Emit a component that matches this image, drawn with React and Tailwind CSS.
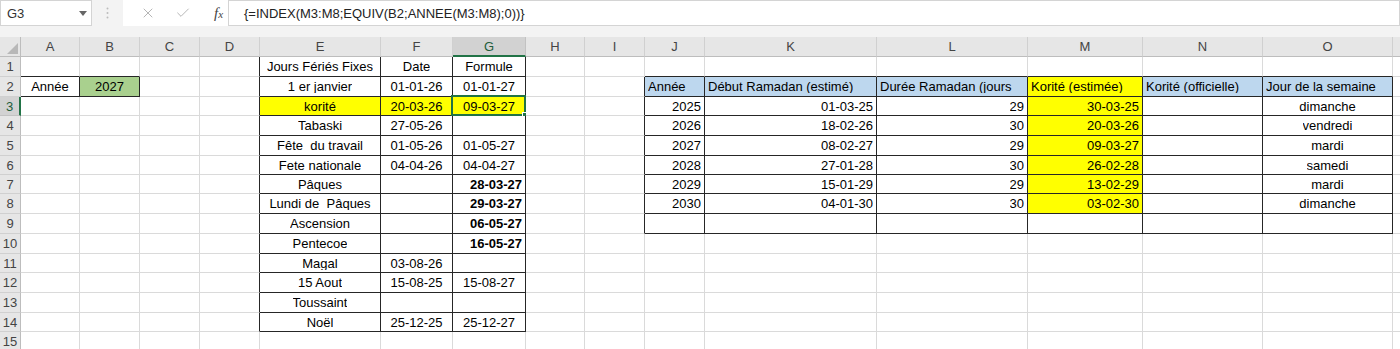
import { X, Check } from 'lucide-react'

const COLS = [
  { id: '', w: 'w-[21px]' },
  { id: 'A', w: 'w-[59px]' },
  { id: 'B', w: 'w-[60px]' },
  { id: 'C', w: 'w-[60px]' },
  { id: 'D', w: 'w-[60px]' },
  { id: 'E', w: 'w-[121px]' },
  { id: 'F', w: 'w-[72px]' },
  { id: 'G', w: 'w-[73px]' },
  { id: 'H', w: 'w-[59px]' },
  { id: 'I', w: 'w-[60px]' },
  { id: 'J', w: 'w-[60px]' },
  { id: 'K', w: 'w-[172px]' },
  { id: 'L', w: 'w-[151px]' },
  { id: 'M', w: 'w-[115px]' },
  { id: 'N', w: 'w-[120px]' },
  { id: 'O', w: 'w-[130px]' },
  { id: 'P', w: 'w-[40px]', hideLabel: true },
]

// row heights, rows 1..15
const ROWS = ['h-5', 'h-5', 'h-[19px]', 'h-5', 'h-5', 'h-[19px]', 'h-[19px]', 'h-5', 'h-5', 'h-5', 'h-[19px]', 'h-5', 'h-5', 'h-[19px]', 'h-5']

const YELLOW = 'bg-[#ffff00]'
const BLUE = 'bg-[#bdd7ee]'
const GREEN = 'bg-[#a9d08e]'

const cells = {
  E1: { v: 'Jours Fériés Fixes' },
  F1: { v: 'Date' },
  G1: { v: 'Formule' },
  A2: { v: 'Année' },
  B2: { v: '2027', bg: GREEN },
  E2: { v: '1 er janvier' },
  F2: { v: '01-01-26' },
  G2: { v: '01-01-27' },
  E3: { v: 'korité', bg: YELLOW },
  F3: { v: '20-03-26', bg: YELLOW },
  G3: { v: '09-03-27', bg: YELLOW },
  E4: { v: 'Tabaski' },
  F4: { v: '27-05-26' },
  E5: { v: 'Fête  du travail' },
  F5: { v: '01-05-26' },
  G5: { v: '01-05-27' },
  E6: { v: 'Fete nationale' },
  F6: { v: '04-04-26' },
  G6: { v: '04-04-27' },
  E7: { v: 'Pâques' },
  G7: { v: '28-03-27', bold: true, a: 'r' },
  E8: { v: 'Lundi de  Pâques' },
  G8: { v: '29-03-27', bold: true, a: 'r' },
  E9: { v: 'Ascension' },
  G9: { v: '06-05-27', bold: true, a: 'r' },
  E10: { v: 'Pentecoe' },
  G10: { v: '16-05-27', bold: true, a: 'r' },
  E11: { v: 'Magal' },
  F11: { v: '03-08-26' },
  E12: { v: '15 Aout' },
  F12: { v: '15-08-25' },
  G12: { v: '15-08-27' },
  E13: { v: 'Toussaint' },
  E14: { v: 'Noël' },
  F14: { v: '25-12-25' },
  G14: { v: '25-12-27' },
  J2: { v: 'Année', a: 'l', bg: BLUE },
  K2: { v: 'Début Ramadan (estimé)', a: 'l', bg: BLUE },
  L2: { v: 'Durée Ramadan (jours', a: 'l', bg: BLUE },
  M2: { v: 'Korité (estimée)', a: 'l', bg: YELLOW },
  N2: { v: 'Korité (officielle)', a: 'l', bg: BLUE },
  O2: { v: 'Jour de la semaine', a: 'l', bg: BLUE },
}

const ramadan = [
  ['2025', '01-03-25', '29', '30-03-25', 'dimanche'],
  ['2026', '18-02-26', '30', '20-03-26', 'vendredi'],
  ['2027', '08-02-27', '29', '09-03-27', 'mardi'],
  ['2028', '27-01-28', '30', '26-02-28', 'samedi'],
  ['2029', '15-01-29', '29', '13-02-29', 'mardi'],
  ['2030', '04-01-30', '30', '03-02-30', 'dimanche'],
]
ramadan.forEach((r, i) => {
  const n = i + 3
  cells['J' + n] = { v: r[0], a: 'r' }
  cells['K' + n] = { v: r[1], a: 'r' }
  cells['L' + n] = { v: r[2], a: 'r' }
  cells['M' + n] = { v: r[3], a: 'r', bg: YELLOW }
  cells['O' + n] = { v: r[4] }
})

const ranges = [
  { c1: 1, c2: 2, r1: 2, r2: 2 },
  { c1: 5, c2: 7, r1: 1, r2: 14 },
  { c1: 10, c2: 15, r1: 2, r2: 9 },
]
const inRange = (c, r) => ranges.some((g) => c >= g.c1 && c <= g.c2 && r >= g.r1 && r <= g.r2)

const SEL_COL = 7
const SEL_ROW = 3

function Cell({ c, r }) {
  const col = COLS[c]
  const data = cells[col.id + r]
  const right = inRange(c, r) || inRange(c + 1, r) ? 'border-r-[#262626]' : 'border-r-[#dadada]'
  const bottom = inRange(c, r) || inRange(c, r + 1) ? 'border-b-[#262626]' : 'border-b-[#dadada]'
  const align = data?.a === 'r' ? 'justify-end' : data?.a === 'l' ? 'justify-start' : 'justify-center'
  const selected = c === SEL_COL && r === SEL_ROW
  return (
    <div
      className={`relative flex shrink-0 items-center border-r border-b px-[3px] ${col.w} ${right} ${bottom} ${align} ${data?.bg ?? 'bg-white'}`}
    >
      {data && (
        <span className={`overflow-hidden whitespace-pre text-black ${data.bold ? 'font-bold' : ''}`}>{data.v}</span>
      )}
      {selected && (
        <div className="absolute -top-[2px] -left-[2px] -right-[1px] -bottom-[1px] border-2 border-[#217346]">
          <div className="absolute -right-[4px] -bottom-[4px] h-[6px] w-[6px] border border-white bg-[#217346]" />
        </div>
      )}
    </div>
  )
}

export default function App() {
  return (
    <div className="h-[349px] w-[1400px] overflow-hidden bg-white font-['Liberation_Sans',Arial,sans-serif] text-[13px] leading-none">
      {/* Formula bar */}
      <div className="flex h-[37px] items-start bg-[#f3f3f3]">
        <div className="flex h-[26px] w-[92px] items-center justify-between border border-[#d4d4d4] bg-white pl-[6px] pr-[4px] text-[#333]">
          <span>G3</span>
          <svg width="8" height="5" viewBox="0 0 8 5">
            <path d="M0 0h8L4 5z" fill="#666" />
          </svg>
        </div>
        <div className="flex h-[26px] w-[31px] items-center justify-center">
          <svg width="3" height="12" viewBox="0 0 3 12">
            <circle cx="1.5" cy="1.5" r="1" fill="#bcbcbc" />
            <circle cx="1.5" cy="6" r="1" fill="#bcbcbc" />
            <circle cx="1.5" cy="10.5" r="1" fill="#bcbcbc" />
          </svg>
        </div>
        <div className="flex h-[26px] w-[105px] items-center bg-white">
          <div className="flex w-[35px] justify-center pl-[14px]">
            <X size={16} strokeWidth={1.25} className="text-[#a6a6a6]" />
          </div>
          <div className="flex w-[35px] justify-center pl-[14px]">
            <Check size={16} strokeWidth={1.25} className="text-[#a6a6a6]" />
          </div>
          <div className="flex w-[35px] justify-center pl-[16px]">
            <span className="font-['Liberation_Serif',serif] text-[15px] italic text-[#444]">
              f<span className="text-[11px]">x</span>
            </span>
          </div>
        </div>
        <div className="flex h-[26px] flex-1 items-center border border-[#d4d4d4] bg-white pl-[15px] text-[#222]">
          {'{=INDEX(M3:M8;EQUIV(B2;ANNEE(M3:M8);0))}'}
        </div>
      </div>

      {/* Column headers */}
      <div className="flex h-5">
        {COLS.map((col, c) =>
          c === 0 ? (
            <div key="corner" className="relative flex w-[21px] shrink-0 items-end justify-end border-r border-b border-[#bdbdbd] bg-[#e6e6e6] p-[2px]">
              <svg width="11" height="11" viewBox="0 0 11 11">
                <path d="M11 0V11H0z" fill="#b8b8b8" />
              </svg>
            </div>
          ) : (
            <div
              key={col.id}
              className={`flex shrink-0 items-center justify-center border-r ${col.w} ${
                c === SEL_COL
                  ? 'border-b-2 border-r-[#c2c2c2] border-b-[#217346] bg-[#d2d2d2] text-[#1e5c3a]'
                  : 'border-b border-r-[#d0d0d0] border-b-[#bdbdbd] bg-[#e6e6e6] text-[#444]'
              }`}
            >
              {col.hideLabel ? '' : col.id}
            </div>
          )
        )}
      </div>

      {/* Rows */}
      {ROWS.map((h, i) => {
        const r = i + 1
        return (
          <div key={r} className={`flex ${h}`}>
            <div
              className={`flex w-[21px] shrink-0 items-center justify-center border-b ${
                r === SEL_ROW
                  ? 'border-r-2 border-r-[#217346] border-b-[#c2c2c2] bg-[#d2d2d2] text-[#1e5c3a]'
                  : 'border-r border-r-[#bdbdbd] border-b-[#d0d0d0] bg-[#e6e6e6] text-[#444]'
              }`}
            >
              {r}
            </div>
            {COLS.slice(1).map((col, j) => (
              <Cell key={col.id} c={j + 1} r={r} />
            ))}
          </div>
        )
      })}
    </div>
  )
}
